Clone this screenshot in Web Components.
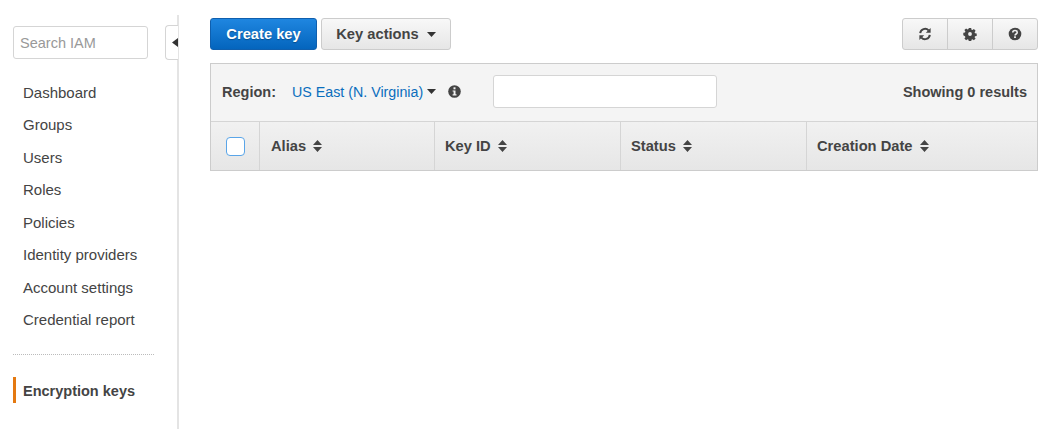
<!DOCTYPE html>
<html>
<head>
<meta charset="utf-8">
<title>Encryption keys</title>
<style>
  html, body { margin: 0; padding: 0; background: #fff; }
  body { font-family: "Liberation Sans", Arial, sans-serif; color: #444; width: 1050px; height: 429px; overflow: hidden; }
</style>
</head>
<body>
<iam-app>
  <iam-sidebar slot="side">
    <iam-nav-item>Dashboard</iam-nav-item>
    <iam-nav-item>Groups</iam-nav-item>
    <iam-nav-item>Users</iam-nav-item>
    <iam-nav-item>Roles</iam-nav-item>
    <iam-nav-item>Policies</iam-nav-item>
    <iam-nav-item>Identity providers</iam-nav-item>
    <iam-nav-item>Account settings</iam-nav-item>
    <iam-nav-item>Credential report</iam-nav-item>
    <iam-nav-item slot="extra" active>Encryption keys</iam-nav-item>
  </iam-sidebar>
  <iam-toolbar></iam-toolbar>
  <iam-key-table></iam-key-table>
</iam-app>

<script>
const ICONS = {
  refresh: '<svg width="14" height="14" viewBox="0 0 14 14"><path d="M2.2 6.2A4.9 4.9 0 0 1 10.6 3.4" fill="none" stroke="#444" stroke-width="2"/><path d="M12.6 1v4.8H7.8z" fill="#444"/><path d="M11.8 7.8A4.9 4.9 0 0 1 3.4 10.6" fill="none" stroke="#444" stroke-width="2"/><path d="M1.4 13V8.2h4.8z" fill="#444"/></svg>',
  gear: '<svg width="14" height="14" viewBox="0 0 14 14"><path fill="#444" fill-rule="evenodd" d="M5.8 1h2.4l.3 1.7 1 .4 1.4-1 1.7 1.7-1 1.4.4 1 1.7.3v2.4l-1.7.3-.4 1 1 1.4-1.7 1.7-1.4-1-1 .4-.3 1.7H5.8l-.3-1.7-1-.4-1.4 1-1.7-1.7 1-1.4-.4-1L.3 8.2V5.8L2 5.5l.4-1-1-1.4 1.7-1.7 1.4 1 1-.4zM7 5.1a1.9 1.9 0 1 0 0 3.8 1.9 1.9 0 0 0 0-3.8z"/></svg>',
  help: '<svg width="14" height="14" viewBox="0 0 14 14"><circle cx="7" cy="7" r="6.3" fill="#444"/><path d="M4.8 5.500c0-1.300 1-2 2.200-2s2.200.7 2.200 1.900c0 1.600-2.100 1.600-2.100 3" fill="none" stroke="#f0f0f0" stroke-width="1.600"/><rect x="6.100" y="9.300" width="1.800" height="1.700" fill="#f0f0f0"/></svg>',
  info: '<svg width="13" height="13" viewBox="0 0 13 13"><circle cx="6.500" cy="6.500" r="6.300" fill="#444"/><rect x="5.500" y="2.300" width="2" height="2" fill="#f4f4f4"/><path d="M4.600 5.400h2.900v3.900h1v1.100H4.600V9.300h1V6.500h-1z" fill="#f4f4f4"/></svg>',
  caret: '<svg width="9" height="5" viewBox="0 0 9 5"><path d="M0 0h9L4.500 5z" fill="#333"/></svg>',
  sort: '<svg width="9" height="12" viewBox="0 0 9 12"><path d="M4.500 0 9 5H0zM0 7h9l-4.500 5z" fill="#444"/></svg>'
};

class IamApp extends HTMLElement {
  constructor() {
    super();
    this.attachShadow({ mode: 'open' });
    this.shadowRoot.innerHTML = `
      <style>
        :host { display: flex; width: 1050px; height: 429px; }
        .side { flex: 0 0 179px; min-width: 0; }
        .main { flex: 1; min-width: 0; padding: 18px 12px 0 31px; display: flex; flex-direction: column; gap: 13px; }
      </style>
      <div class="side"><slot name="side"></slot></div>
      <div class="main"><slot></slot></div>
    `;
  }
}

class IamSidebar extends HTMLElement {
  constructor() {
    super();
    this.attachShadow({ mode: 'open' });
    this.shadowRoot.innerHTML = `
      <style>
        :host { display: block; height: 429px; box-sizing: border-box; padding-top: 15px; }
        .rail { height: 414px; box-sizing: border-box; border-right: 2px solid #e4e4e4; position: relative; padding: 11px 29px 0 13px; }
        input {
          display: block; width: 100%; height: 33px; box-sizing: border-box; margin: 0;
          border: 1px solid #d5d5d5; border-radius: 3px; padding: 0 6px;
          font: 14.5px "Liberation Sans", Arial, sans-serif; color: #444; background: #fff;
        }
        input::placeholder { color: #999; opacity: 1; }
        .toggle {
          position: absolute; left: 165px; top: 10px; width: 13px; height: 35px; box-sizing: border-box;
          background: #fff; border: 1px solid #d5d5d5; border-right: 0; border-radius: 4px 0 0 4px;
          display: flex; align-items: center; justify-content: flex-end;
        }
        nav { margin-top: 17px; display: flex; flex-direction: column; }
        hr { border: 0; border-top: 1px dotted #bbb; margin: 18px -6px 0 0; }
        .extra { margin-top: 22px; }
      </style>
      <div class="rail">
        <input placeholder="Search IAM">
        <div class="toggle"><svg width="6" height="9" viewBox="0 0 6 9"><path d="M6 0v9L0 4.500z" fill="#333"/></svg></div>
        <nav><slot></slot></nav>
        <hr>
        <div class="extra"><slot name="extra"></slot></div>
      </div>
    `;
  }
}

class IamNavItem extends HTMLElement {
  constructor() {
    super();
    this.attachShadow({ mode: 'open' });
    this.shadowRoot.innerHTML = `
      <style>
        :host { display: flex; align-items: center; height: 32.5px; box-sizing: border-box; padding-left: 10px; font-size: 15px; color: #444; white-space: nowrap; }
        :host([active]) { height: 26px; padding: 1px 0 0 7px; border-left: 3px solid #e47911; font-size: 14.5px; font-weight: bold; }
      </style>
      <slot></slot>
    `;
  }
}

class IamToolbar extends HTMLElement {
  constructor() {
    super();
    this.attachShadow({ mode: 'open' });
    this.shadowRoot.innerHTML = `
      <style>
        :host { display: flex; align-items: stretch; height: 32px; gap: 4px; }
        button {
          font: bold 14.7px "Liberation Sans", Arial, sans-serif; margin: 0; padding: 0; cursor: pointer;
          border-radius: 3px; box-sizing: border-box; display: flex; align-items: center; justify-content: center;
        }
        .primary { width: 107px; color: #fff; border: 1px solid #0f5fae; background: linear-gradient(#1f86e0, #0465bd); text-shadow: 0 1px 1px rgba(0,0,0,.3); }
        .plain { background: linear-gradient(#f8f8f8, #e6e6e6); border: 1px solid #ccc; color: #444; }
        .actions { width: 130px; gap: 8px; }
        .group { margin-left: auto; display: flex; width: 136px; box-sizing: border-box; background: linear-gradient(#f8f8f8, #e6e6e6); border: 1px solid #ccc; border-radius: 3px; }
        .group button { flex: 1; background: none; border: 0; border-radius: 0; }
        .group button + button { border-left: 1px solid #ccc; }
      </style>
      <button class="primary">Create key</button>
      <button class="plain actions">Key actions ${ICONS.caret}</button>
      <div class="group">
        <button aria-label="Refresh">${ICONS.refresh}</button>
        <button aria-label="Settings">${ICONS.gear}</button>
        <button aria-label="Help">${ICONS.help}</button>
      </div>
    `;
  }
}

class IamKeyTable extends HTMLElement {
  constructor() {
    super();
    this.attachShadow({ mode: 'open' });
    const cols = ['Alias', 'Key ID', 'Status', 'Creation Date'];
    this.shadowRoot.innerHTML = `
      <style>
        :host { display: block; width: 828px; box-sizing: border-box; border: 1px solid #ccc; font-size: 14.5px; font-weight: bold; color: #444; }
        .filter { height: 58px; box-sizing: border-box; background: #f4f4f4; display: flex; align-items: center; padding: 0 10px 2px 11px; border-bottom: 1px solid #d5d5d5; }
        .region { margin-left: 16px; font-size: 14.25px; font-weight: normal; color: #0a6ebd; }
        .caret { margin-left: 4px; display: flex; }
        .info { margin-left: 12px; display: flex; }
        input { width: 224px; height: 33px; box-sizing: border-box; margin: 0 0 0 32px; border: 1px solid #d5d5d5; border-radius: 3px; background: #fff; }
        .count { margin-left: auto; }
        .head { height: 48px; display: grid; grid-template-columns: 48px 175px 186px 186px 1fr; background: linear-gradient(#f1f1f1, #e6e6e6); font-size: 14.7px; }
        .cell { display: flex; align-items: center; gap: 7px; padding-left: 10px; border-left: 1px solid #d5d5d5; }
        .cell:first-child { border-left: 0; padding-left: 15px; }
        .cell:nth-child(2) { padding-left: 11px; }
        .check { width: 19px; height: 19px; box-sizing: border-box; border: 1.5px solid #5aa5e8; border-radius: 4px; background: #fff; }
        svg { display: block; }
      </style>
      <div class="filter">
        <span>Region:</span>
        <span class="region">US East (N. Virginia)</span>
        <span class="caret">${ICONS.caret}</span>
        <span class="info">${ICONS.info}</span>
        <input aria-label="Filter">
        <span class="count">Showing 0 results</span>
      </div>
      <div class="head">
        <div class="cell"><div class="check"></div></div>
        ${cols.map(c => `<div class="cell"><span>${c}</span>${ICONS.sort}</div>`).join('')}
      </div>
    `;
  }
}

customElements.define('iam-app', IamApp);
customElements.define('iam-sidebar', IamSidebar);
customElements.define('iam-nav-item', IamNavItem);
customElements.define('iam-toolbar', IamToolbar);
customElements.define('iam-key-table', IamKeyTable);
</script>
</body>
</html>
